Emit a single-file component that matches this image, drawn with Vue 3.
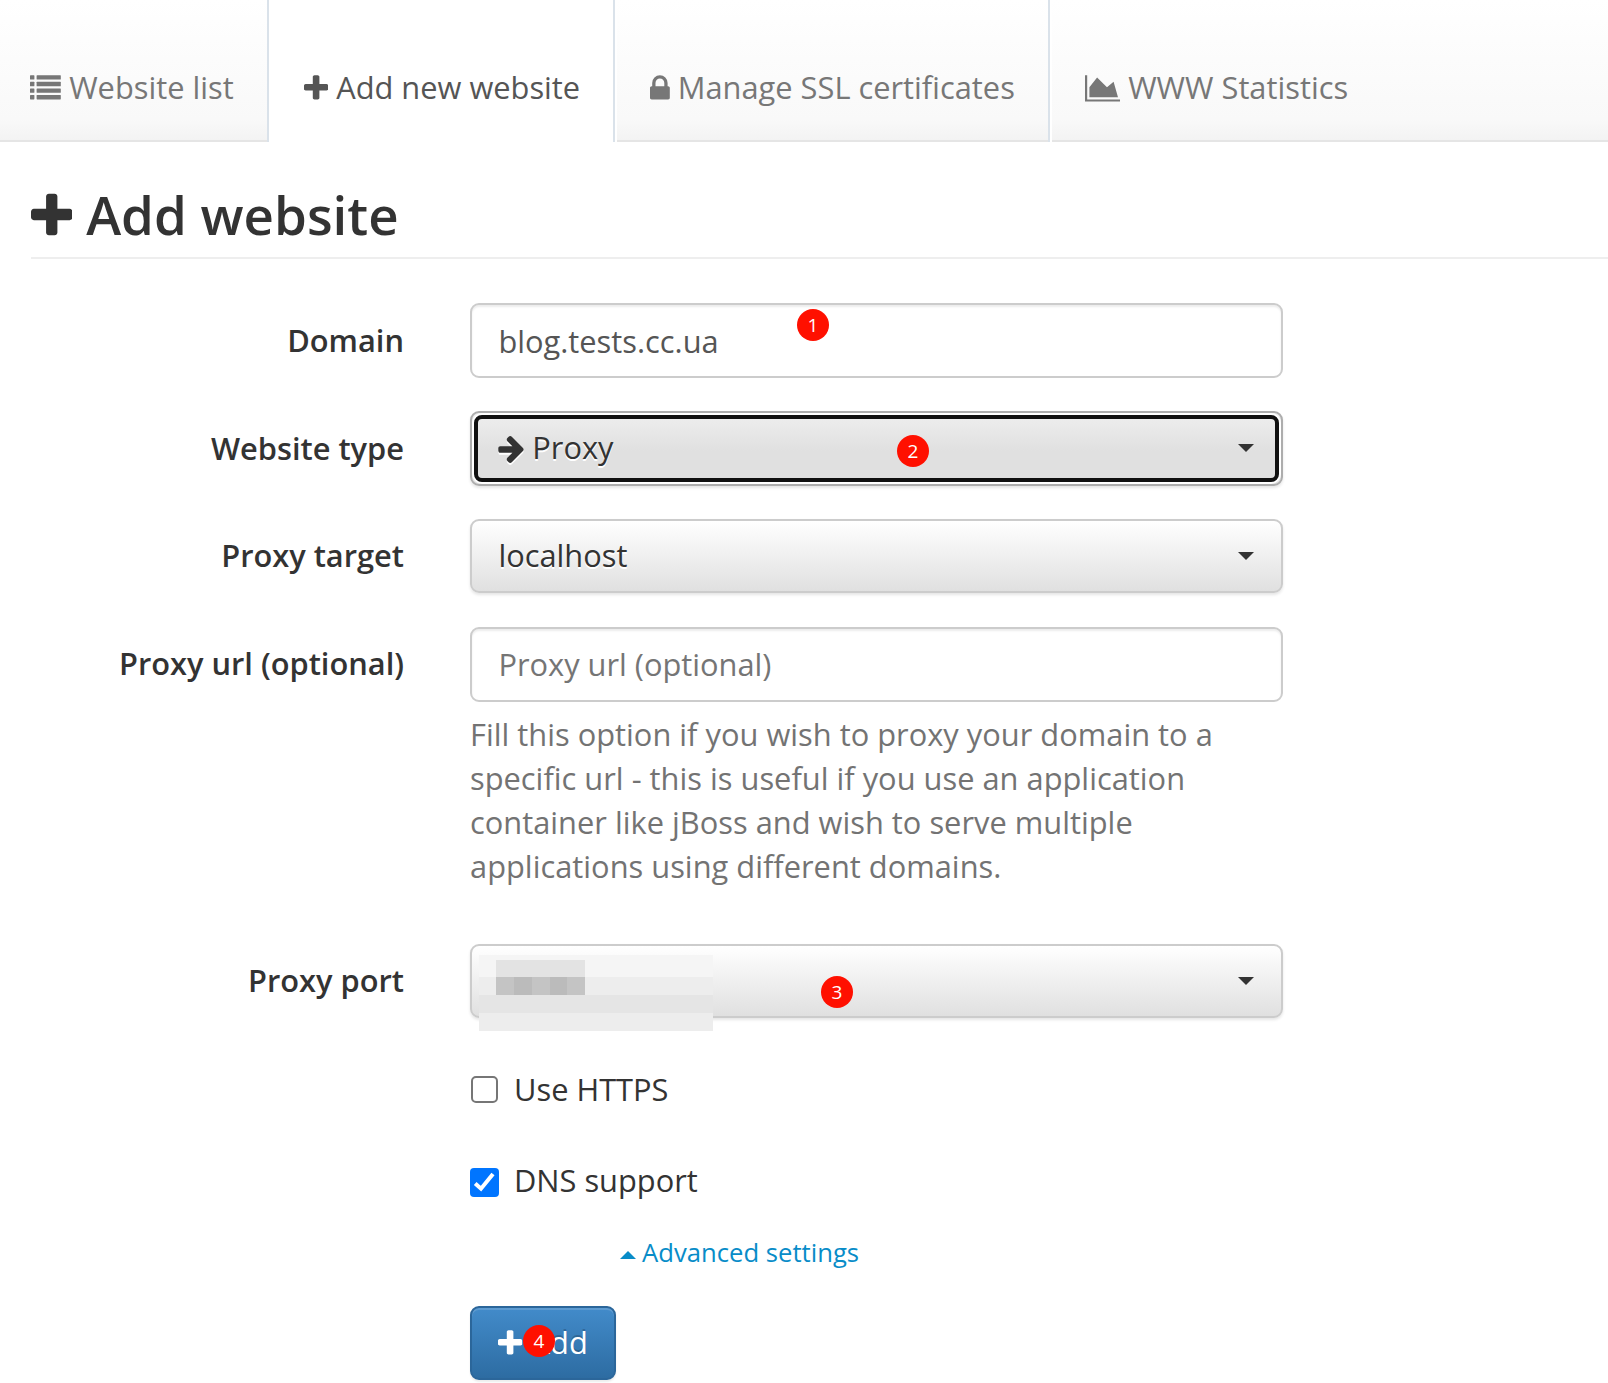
<script setup>
const plusPath = 'M1600 736v192q0 40-28 68t-68 28h-416v416q0 40-28 68t-68 28h-192q-40 0-68-28t-28-68v-416h-416q-40 0-68-28t-28-68v-192q0-40 28-68t68-28h416v-416q0-40 28-68t68-28h192q40 0 68 28t28 68v416h416q40 0 68 28t28 68z'
const listRows = [128, 512, 896, 1280]
</script>

<template>
  <div class="page">
    <nav class="tabs">
      <a class="tab first">
        <svg class="ico list" viewBox="0 0 1792 1792">
          <g v-for="y in listRows" :key="y">
            <rect x="0" :y="y" width="256" height="256" rx="32" />
            <rect x="384" :y="y" width="1408" height="256" rx="32" />
          </g>
        </svg> Website list
      </a>
      <a class="tab active">
        <svg class="ico plus" viewBox="192 0 1408 1792"><path :d="plusPath" /></svg> Add new website
      </a>
      <a class="tab ssl">
        <svg class="ico lock" viewBox="320 0 1152 1792"><path d="M640 768h512v-192q0-106-75-181t-181-75-181 75-75 181v192zm832 96v576q0 40-28 68t-68 28h-960q-40 0-68-28t-28-68v-576q0-40 28-68t68-28h32v-192q0-184 132-316t316-132 316 132 132 316v192h32q40 0 68 28t28 68z" /></svg> Manage SSL certificates
      </a>
      <a class="tab stats">
        <svg class="ico area" viewBox="0 0 2048 1792"><path d="M2048 1536v128h-2048v-1536h128v1408h1920zm-384-1024l256 896h-1664v-576l448-576 576 576z" /></svg> WWW Statistics
      </a>
    </nav>

    <h1 class="title">
      <svg class="ico plus" viewBox="192 0 1408 1792"><path :d="plusPath" /></svg> Add website
    </h1>

    <form class="form">
      <div class="row">
        <label>Domain</label>
        <div class="control input">blog.tests.cc.ua<span class="badge b1">1</span></div>
      </div>
      <div class="row">
        <label>Website type</label>
        <div class="control select focused">
          <span class="value">
            <svg class="ico arrow" viewBox="128 0 1472 1792"><path d="M1600 960q0 54-37 91l-651 651q-39 37-91 37-51 0-90-37l-75-75q-38-38-38-91t38-91l293-293h-704q-52 0-84.5-37.5t-32.5-90.5v-128q0-53 32.5-90.5t84.5-37.5h704l-293-294q-38-36-38-90t38-90l75-75q38-38 90-38 53 0 91 38l651 651q37 35 37 90z" /></svg> Proxy</span>
          <span class="caret"></span>
          <span class="badge b2">2</span>
        </div>
      </div>
      <div class="row target">
        <label>Proxy target</label>
        <div class="control select"><span class="value">localhost</span><span class="caret"></span></div>
      </div>
      <div class="row url">
        <label>Proxy url (optional)</label>
        <div class="stack">
          <div class="control input placeholder">Proxy url (optional)</div>
          <p class="help">Fill this option if you wish to proxy your domain to a<br>specific url - this is useful if you use an application<br>container like jBoss and wish to serve multiple<br>applications using different domains.</p>
        </div>
      </div>
      <div class="row port">
        <label>Proxy port</label>
        <div class="control select">
          <span class="value"></span><span class="caret"></span>
          <span class="mosaic">
            <i class="m1"></i><i class="m2"></i><i class="m3"></i><i class="m4"></i>
            <span class="cells"><b></b><b></b><b></b><b></b><b></b></span>
          </span>
          <span class="badge b3">3</span>
        </div>
      </div>
      <div class="check https"><span class="box"></span>Use HTTPS</div>
      <div class="check dns">
        <svg class="tick" viewBox="0 0 29 29"><rect width="29" height="29" rx="4" fill="#0075ff" /><path d="M5.2 15.4l5.8 5.3L23 6" fill="none" stroke="#fff" stroke-width="4" /></svg>DNS support
      </div>
      <div class="advanced"><span class="caret-up"></span>Advanced settings</div>
      <button type="button" class="submit">
        <svg class="ico plus" viewBox="192 0 1408 1792"><path :d="plusPath" /></svg> Add<span class="badge b4">4</span>
      </button>
    </form>
  </div>
</template>

<style>
body { margin: 0; background: #fff; }
</style>

<style scoped>
.page {
  box-sizing: border-box;
  width: 1608px;
  height: 1383px;
  overflow: hidden;
  background: #fff;
  color: #333;
  font: 30.8px/44px "Open Sans", "Noto Sans", sans-serif;
}
.page *, .page *::before { box-sizing: border-box; }
.ico { height: 1em; vertical-align: -0.1429em; fill: currentColor; }
.list { width: 1em; }
.plus { width: 0.7857em; }
.lock { width: 0.6429em; }
.area { width: 1.1429em; }
.arrow { width: 0.8409em; }

.tabs {
  display: flex;
  height: 142px;
  background: linear-gradient(#fff 0, #f9f9f9 85%, #f3f3f3 100%);
  border-bottom: 2px solid #e5e5e5;
}
.tab {
  height: 142px;
  padding-top: 65px;
  padding-left: 33px;
  color: #777;
  white-space: nowrap;
  border-right: 2px solid #dae2ea;
}
.tab.first { width: 269px; padding-left: 30.4px; }
.tab.active { width: 346px; padding-left: 35px; background: #fff; color: #555; }
.tab.ssl { width: 435px; border-left: 2px solid #fff; }
.tab.stats { flex: 1; border-left: 2px solid #fff; border-right: 0; }

.title {
  height: 117px;
  margin: 0 0 44px 31px;
  padding-top: 44px;
  font-size: 52.8px;
  line-height: 58px;
  font-weight: 600;
  border-bottom: 2px solid #eee;
}

.row { display: flex; height: 108px; }
.row label {
  width: 404px;
  margin-right: 66px;
  padding-top: 15px;
  font-weight: 600;
  text-align: right;
}
.row.target label, .row.url label, .row.port label { padding-top: 14px; }
.row.url { height: 317px; }
.row.port { height: 123px; }
.control {
  position: relative;
  width: 813px;
  height: 75px;
  padding: 0 26px 0 26.4px;
  border: 2px solid #ccc;
  border-radius: 9px;
}
.input {
  padding-top: 14px;
  color: #555;
  box-shadow: inset 0 2px 2px rgba(0, 0, 0, .075);
}
.placeholder { padding-top: 13px; color: #757575; }
.select {
  display: flex;
  justify-content: space-between;
  height: 74px;
  padding-top: 12px;
  text-shadow: 0 2px 0 #fff;
  background: linear-gradient(#fff, #e0e0e0);
  box-shadow: 0 2px 3px rgba(0, 0, 0, .1);
}
.select .ico { filter: drop-shadow(0 2px 0 #fff); }
.caret {
  height: 8px;
  margin: 19px 1px 0 0;
  border: 8px solid transparent;
  border-top-color: #333;
  border-bottom: 0;
}
.focused {
  height: 75px;
  background: linear-gradient(#ededed 4px, #e0e0e0 38px);
  border-color: #adadad;
}
.focused::before {
  content: "";
  position: absolute;
  inset: 0;
  border: 4px solid #101010;
  border-radius: 8px;
  margin: 2px;
  box-shadow: 0 0 0 2px #fff;
}
.help { margin: 10px 0 0; color: #737373; white-space: nowrap; letter-spacing: 0.015px; }

.mosaic {
  position: absolute;
  left: 7px;
  top: 9px;
  width: 234px;
}
.mosaic i { display: block; height: 18px; }
.mosaic .m1 { height: 22px; background: #f5f5f5; }
.m2, .m4 { background: #ededed; }
.m3 { background: #e5e5e5; }
.cells {
  position: absolute;
  left: 17px;
  top: 5px;
  width: 89px;
  padding-top: 17px;
  display: grid;
  grid-template-columns: 18px 18px 18px 17px 18px;
  background: #e3e3e3;
}
.cells b { height: 18px; background: #c4c4c4; }
.cells b:nth-child(even) { background: #bbb; }

.check {
  display: flex;
  align-items: center;
  height: 44px;
  margin-left: 470px;
}
.box {
  width: 27px;
  height: 27px;
  margin: 1px 16px 0 1px;
  border: 2px solid #767676;
  border-radius: 5px;
}
.dns { margin-top: 47px; }
.tick { width: 29px; height: 29px; margin: 5px 15px 0 0; }
.advanced {
  display: flex;
  align-items: center;
  gap: 6px;
  height: 38px;
  margin: 32px 0 0 620px;
  color: #088cc8;
  font-size: 25.67px;
  line-height: 38px;
}
.caret-up {
  border: 8px solid transparent;
  border-bottom-color: #088cc8;
  border-top: 0;
  margin-top: 4px;
}
.submit {
  position: relative;
  display: block;
  width: 146px;
  height: 74px;
  margin: 34px 0 0 470px;
  padding: 0 0 2px 26.4px;
  font: inherit;
  text-align: left;
  color: #fff;
  text-shadow: 0 -2px 0 rgba(0, 0, 0, .2);
  border: 2px solid #2b669a;
  border-radius: 9px;
  background: linear-gradient(#428bca, #2d6ca2);
  box-shadow: inset 0 2px 0 rgba(255, 255, 255, .15), 0 2px 2px rgba(0, 0, 0, .075);
}
.badge {
  position: absolute;
  width: 32px;
  height: 32px;
  border-radius: 50%;
  background: #ff1000;
  color: #fff;
  font-size: 19px;
  line-height: 33px;
  text-align: center;
  text-shadow: none;
}
.b1 { left: 325px; top: 4px; }
.b2 { left: 425px; top: 22px; }
.b3 { left: 349px; top: 30px; }
.b4 { left: 51px; top: 17px; }
</style>
